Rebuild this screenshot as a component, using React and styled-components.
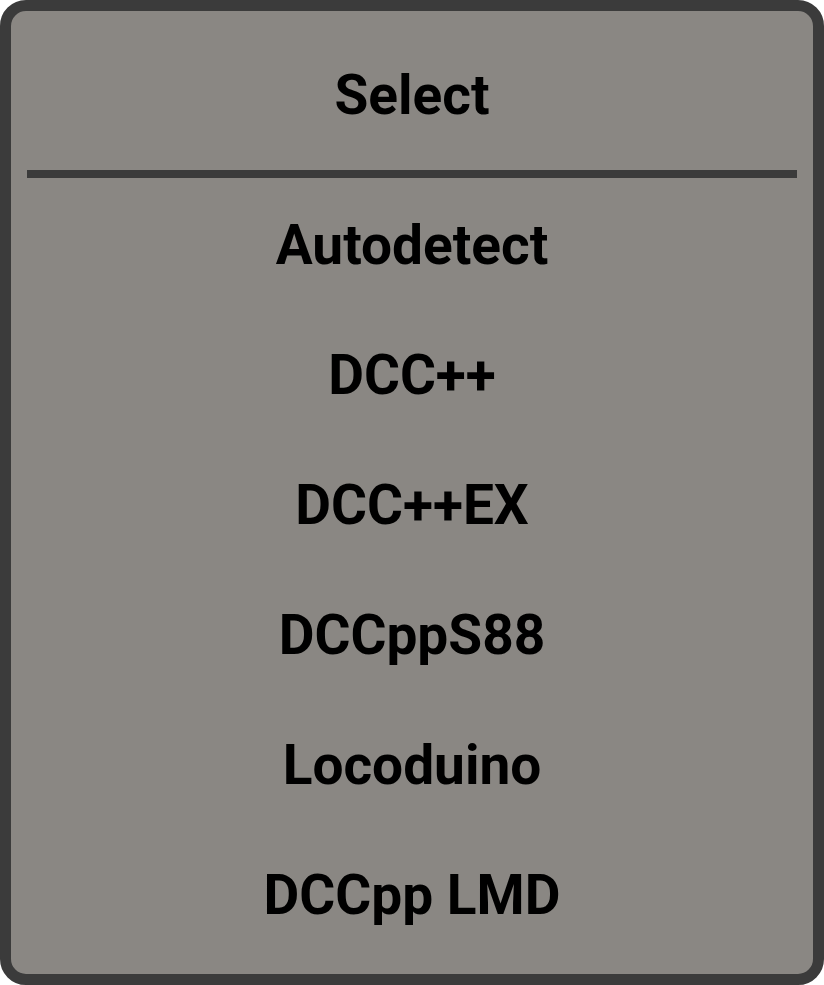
import React from 'react';
import styled, { createGlobalStyle } from 'styled-components';

const GlobalStyle = createGlobalStyle`
  html, body {
    margin: 0;
    padding: 0;
    background: #ffffff;
  }
  * {
    box-sizing: border-box;
  }
`;

const Dialog = styled.div`
  width: 824px;
  height: 985px;
  background: #8a8783;
  border: 11px solid #3b3b3b;
  border-radius: 26px;
  display: flex;
  flex-direction: column;
  font-family: Roboto, "Liberation Sans", sans-serif;
  font-weight: 700;
  color: #000;
`;

const Title = styled.div`
  padding: 19px 0 10px;
  line-height: 130px;
  font-size: 55px;
  text-align: center;
`;

const Divider = styled.div`
  height: 8px;
  margin: 0 16px;
  background: #3b3b3b;
`;

const OptionList = styled.div`
  display: flex;
  flex-direction: column;
  padding-top: 2px;
`;

const Option = styled.div`
  height: 130px;
  line-height: 130px;
  font-size: 55px;
  text-align: center;
  cursor: pointer;
`;

const options = ['Autodetect', 'DCC++', 'DCC++EX', 'DCCppS88', 'Locoduino', 'DCCpp LMD'];

const App = () => (
  <>
    <GlobalStyle />
    <Dialog>
      <Title>Select</Title>
      <Divider />
      <OptionList>
        {options.map((name) => (
          <Option key={name}>{name}</Option>
        ))}
      </OptionList>
    </Dialog>
  </>
);

export default App;
